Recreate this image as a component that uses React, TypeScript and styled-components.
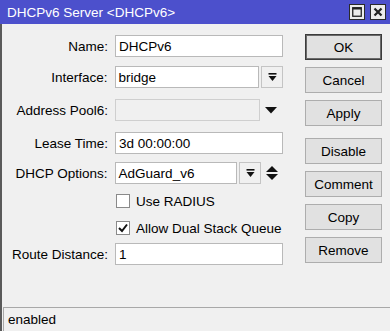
import React from 'react';
import styled, { createGlobalStyle } from 'styled-components';

const GlobalStyle = createGlobalStyle`
  html, body {
    margin: 0;
    padding: 0;
    background: #f0f0f0;
  }
  body {
    font-family: 'Liberation Sans', Arial, sans-serif;
    font-size: 13.5px;
    color: #000;
  }
`;

const Window = styled.div`
  width: 390px;
  height: 331px;
  display: flex;
  flex-direction: column;
  background: #f0f0f0;
  overflow: hidden;
`;

const TitleBar = styled.div`
  height: 24px;
  flex-shrink: 0;
  background: #4c50cc;
  display: flex;
  align-items: center;
  justify-content: space-between;
  padding: 0 4px 0 7px;
  color: #fff;
`;

const TitleText = styled.span`
  font-size: 13.5px;
  margin-top: 1px;
`;

const TitleButtons = styled.div`
  display: flex;
  gap: 5px;
`;

const TitleButton = styled.div`
  width: 14px;
  height: 14px;
  border: 1px solid #2a2a2a;
  background: #ececec;
  display: flex;
  align-items: center;
  justify-content: center;
`;

const Content = styled.div`
  flex: 1;
  display: flex;
  flex-direction: column;
  border-left: 2px solid #5a5a5a;
`;

const Body = styled.div`
  height: 283px;
  display: flex;
`;

const Form = styled.div`
  width: 281px;
  display: flex;
  flex-direction: column;
`;

const Row = styled.div<{ $mt: number }>`
  display: flex;
  align-items: center;
  height: 22px;
  margin-top: ${({ $mt }) => $mt}px;
`;

const Label = styled.label`
  width: 106px;
  margin-right: 7px;
  text-align: right;
  white-space: nowrap;
`;

const Input = styled.div<{ $w: number; $disabled?: boolean }>`
  box-sizing: border-box;
  width: ${({ $w }) => $w}px;
  height: 22px;
  border: 1px solid ${({ $disabled }) => ($disabled ? '#cfcfcf' : '#b9b9b9')};
  background: ${({ $disabled }) => ($disabled ? '#f0f0f0' : '#fff')};
  padding: 0 3px;
  display: flex;
  align-items: center;
  white-space: nowrap;
`;

const DropButton = styled.div`
  box-sizing: border-box;
  width: 22px;
  height: 22px;
  margin-left: 2px;
  border: 1px solid #c4c4c4;
  background: #f0f0f0;
  display: flex;
  align-items: center;
  justify-content: center;
`;

const IconSlot = styled.div`
  width: 22px;
  height: 22px;
  display: flex;
  align-items: center;
  justify-content: center;
`;

const CheckRow = styled.div<{ $mt: number }>`
  display: flex;
  align-items: center;
  height: 22px;
  margin-top: ${({ $mt }) => $mt}px;
  padding-left: 114px;
  gap: 6px;
`;

const CheckBox = styled.div`
  box-sizing: border-box;
  width: 14px;
  height: 14px;
  border: 1px solid #8a8a8a;
  background: #fff;
  display: flex;
  align-items: center;
  justify-content: center;
`;

const Buttons = styled.div`
  margin-left: 22px;
  padding-top: 10px;
  display: flex;
  flex-direction: column;
  gap: 7px;
`;

const Button = styled.div<{ $default?: boolean; $mt?: number }>`
  box-sizing: border-box;
  width: 77px;
  height: 26px;
  margin-top: ${({ $mt }) => $mt ?? 0}px;
  border: 1px solid ${({ $default }) => ($default ? '#3c3c3c' : '#adadad')};
  box-shadow: ${({ $default }) => ($default ? 'inset 0 0 0 1px #6a6a6a' : 'none')};
  background: #e1e1e1;
  display: flex;
  align-items: center;
  justify-content: center;
`;

const StatusBar = styled.div`
  flex: 1;
  margin-left: 1px;
  border-top: 1px solid #a8a8a8;
  border-left: 1px solid #a8a8a8;
  padding-left: 4px;
  display: flex;
  align-items: center;
`;

const DropIcon = () => (
  <svg width="9" height="9" viewBox="0 0 9 9">
    <rect x="0.5" y="0" width="8" height="1.6" fill="#111" />
    <polygon points="0.5,3 8.5,3 4.5,8" fill="#111" />
  </svg>
);

const ArrowDown = () => (
  <svg width="12" height="7" viewBox="0 0 12 7">
    <polygon points="0,0 12,0 6,6.5" fill="#111" />
  </svg>
);

const UpDown = () => (
  <svg width="12" height="14" viewBox="0 0 12 14">
    <polygon points="6,0 12,6 0,6" fill="#111" />
    <polygon points="0,8 12,8 6,14" fill="#111" />
  </svg>
);

const Check = () => (
  <svg width="10" height="10" viewBox="0 0 10 10">
    <polyline points="1,5 4,8 9,1.5" fill="none" stroke="#111" strokeWidth="2" />
  </svg>
);

const App: React.FC = () => {
  return (
    <>
      <GlobalStyle />
      <Window>
        <TitleBar>
          <TitleText>DHCPv6 Server &lt;DHCPv6&gt;</TitleText>
          <TitleButtons>
            <TitleButton>
              <svg width="10" height="10" viewBox="0 0 10 10">
                <rect x="0.75" y="0.75" width="8.5" height="8.5" fill="none" stroke="#222" strokeWidth="1.3" />
                <rect x="0.5" y="0.5" width="9" height="2" fill="#222" />
              </svg>
            </TitleButton>
            <TitleButton>
              <svg width="10" height="10" viewBox="0 0 10 10">
                <path d="M1.5 1.5 L8.5 8.5 M8.5 1.5 L1.5 8.5" stroke="#222" strokeWidth="2.2" />
              </svg>
            </TitleButton>
          </TitleButtons>
        </TitleBar>
        <Content>
          <Body>
            <Form>
              <Row $mt={11}>
                <Label>Name:</Label>
                <Input $w={168}>DHCPv6</Input>
              </Row>
              <Row $mt={9}>
                <Label>Interface:</Label>
                <Input $w={145}>bridge</Input>
                <DropButton>
                  <DropIcon />
                </DropButton>
              </Row>
              <Row $mt={11}>
                <Label>Address Pool6:</Label>
                <Input $w={145} $disabled />
                <IconSlot>
                  <ArrowDown />
                </IconSlot>
              </Row>
              <Row $mt={11}>
                <Label>Lease Time:</Label>
                <Input $w={168}>3d 00:00:00</Input>
              </Row>
              <Row $mt={8}>
                <Label>DHCP Options:</Label>
                <Input $w={123}>AdGuard_v6</Input>
                <DropButton>
                  <DropIcon />
                </DropButton>
                <IconSlot>
                  <UpDown />
                </IconSlot>
              </Row>
              <CheckRow $mt={6}>
                <CheckBox />
                <span>Use RADIUS</span>
              </CheckRow>
              <CheckRow $mt={5}>
                <CheckBox>
                  <Check />
                </CheckBox>
                <span>Allow Dual Stack Queue</span>
              </CheckRow>
              <Row $mt={4}>
                <Label>Route Distance:</Label>
                <Input $w={168}>1</Input>
              </Row>
            </Form>
            <Buttons>
              <Button $default>OK</Button>
              <Button>Cancel</Button>
              <Button>Apply</Button>
              <Button $mt={5}>Disable</Button>
              <Button>Comment</Button>
              <Button>Copy</Button>
              <Button>Remove</Button>
            </Buttons>
          </Body>
          <StatusBar>enabled</StatusBar>
        </Content>
      </Window>
    </>
  );
};

export default App;
